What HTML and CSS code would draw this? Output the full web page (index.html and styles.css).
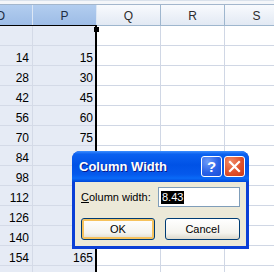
FILE: index.html
```html
<!DOCTYPE html>
<html>
<head>
<meta charset="utf-8">
<link rel="stylesheet" href="styles.css">
</head>
<body>
<div class="sheet">
  <div class="topbar"></div>
  <div class="grid">
    <div class="hd sel">O</div><div class="hd sel">P</div><div class="hd">Q</div><div class="hd">R</div><div class="hd">S</div>
    <div class="c sel"></div><div class="c sel"></div><div class="c"></div><div class="c"></div><div class="c"></div>
    <div class="c sel">14</div><div class="c sel">15</div><div class="c"></div><div class="c"></div><div class="c"></div>
    <div class="c sel">28</div><div class="c sel">30</div><div class="c"></div><div class="c"></div><div class="c"></div>
    <div class="c sel">42</div><div class="c sel">45</div><div class="c"></div><div class="c"></div><div class="c"></div>
    <div class="c sel">56</div><div class="c sel">60</div><div class="c"></div><div class="c"></div><div class="c"></div>
    <div class="c sel">70</div><div class="c sel">75</div><div class="c"></div><div class="c"></div><div class="c"></div>
    <div class="c sel">84</div><div class="c sel">90</div><div class="c"></div><div class="c"></div><div class="c"></div>
    <div class="c sel">98</div><div class="c sel">105</div><div class="c"></div><div class="c"></div><div class="c"></div>
    <div class="c sel">112</div><div class="c sel">120</div><div class="c"></div><div class="c"></div><div class="c"></div>
    <div class="c sel">126</div><div class="c sel">135</div><div class="c"></div><div class="c"></div><div class="c"></div>
    <div class="c sel">140</div><div class="c sel">150</div><div class="c"></div><div class="c"></div><div class="c"></div>
    <div class="c sel">154</div><div class="c sel">165</div><div class="c"></div><div class="c"></div><div class="c"></div>
    <div class="c sel"></div><div class="c sel"></div><div class="c"></div><div class="c"></div><div class="c"></div>
  </div>
</div>
<div class="selection"><span class="handle"></span></div>
<div class="dialog">
  <div class="titlebar">
    <span class="title">Column Width</span>
    <span class="cap help">?</span>
    <span class="cap close"><svg width="19" height="19" viewBox="0 0 19 19"><path d="M5 5L14 14M14 5L5 14" stroke="#fff" stroke-width="2.2" stroke-linecap="square"/></svg></span>
  </div>
  <div class="client">
    <div class="field-row">
      <span class="label"><u>C</u>olumn width:</span>
      <div class="input"><span class="hl">8.43</span></div>
    </div>
    <div class="btn-row">
      <button class="btn default">OK</button>
      <button class="btn">Cancel</button>
    </div>
  </div>
</div>
</body>
</html>
```
FILE: styles.css
```css
* { box-sizing: border-box; }
html, body { margin: 0; padding: 0; }
body {
  width: 274px;
  height: 272px;
  overflow: hidden;
  position: relative;
  background: #fff;
  font-family: "Liberation Sans", Arial, sans-serif;
}
.sheet {
  margin-left: -31px;
  width: 320px;
}
.topbar {
  height: 5px;
  background: linear-gradient(to bottom, #d9e1eb 0, #d9e1eb 1px, #f4f6f9 1px, #f4f6f9 4px, #a3b6cc 4px, #a3b6cc 5px);
}
.grid {
  display: grid;
  grid-template-columns: repeat(5, 64px);
  grid-template-rows: 21px;
  grid-auto-rows: 20px;
}
.hd {
  border-right: 1px solid #9eb6ce;
  border-bottom: 1px solid #9eb6ce;
  background: linear-gradient(to bottom, #f8fafd, #e2e9f3);
  display: flex;
  align-items: center;
  justify-content: center;
  font-size: 12px;
  color: #2c2c2c;
  padding-top: 1px;
}
.hd.sel {
  background: linear-gradient(to bottom, #b2cdef, #9dbce6);
  border-right-color: #dce7f5;
  color: #1e2e44;
}
.c {
  border-right: 1px solid #d0d7e5;
  border-bottom: 1px solid #d0d7e5;
  display: flex;
  align-items: flex-end;
  justify-content: flex-end;
  padding: 0 3px 1px 0;
  font-size: 12px;
  line-height: 12px;
  color: #000;
}
.c.sel {
  background: #e6ebf5;
  border-color: #d4dae7;
}
.selection {
  position: absolute;
  left: -10px;
  top: 25px;
  width: 107px;
  bottom: -10px;
  border-top: 1px solid #000;
  border-right: 2px solid #000;
}
.handle {
  position: absolute;
  left: 104px;
  top: 1px;
  width: 5px;
  height: 5px;
  background: #000;
}
.dialog {
  position: absolute;
  left: 72px;
  top: 151px;
  width: 177px;
  height: 98px;
  border-radius: 8px 8px 0 0;
  background: #0b3fd6;
  display: flex;
  flex-direction: column;
  overflow: hidden;
}
.titlebar {
  height: 31px;
  flex: none;
  display: flex;
  align-items: center;
  padding: 0 4px 0 7px;
  background: linear-gradient(to bottom, #3d8fff 0%, #0b61f0 10%, #0052e6 45%, #0559ec 75%, #0a6af7 88%, #0047d9 100%);
}
.title {
  flex: 1;
  color: #fff;
  font-weight: bold;
  font-size: 13px;
  text-shadow: 1px 1px 0 #0a1a8a;
}
.cap {
  width: 21px;
  height: 21px;
  border: 1px solid #fff;
  border-radius: 3px;
  display: flex;
  align-items: center;
  justify-content: center;
}
.help {
  margin-right: 2px;
  background: radial-gradient(circle at 30% 25%, #6e9cf8, #2a62e8 55%, #1a4fd6);
  color: #fff;
  font-weight: bold;
  font-size: 15px;
}
.close {
  background: radial-gradient(circle at 30% 25%, #f08a68, #e0522c 55%, #c83a18);
}
.client {
  flex: 1;
  margin: 0 3px 3px;
  background: #ece9d8;
  padding: 5px 6px 0 6px;
  display: flex;
  flex-direction: column;
}
.field-row {
  display: flex;
  justify-content: space-between;
  align-items: center;
  height: 20px;
}
.label {
  font-size: 11px;
  color: #000;
}
.input {
  width: 82px;
  height: 20px;
  border: 1px solid #7f9db9;
  background: #fff;
  padding: 2px;
  display: flex;
  align-items: center;
}
.hl {
  background: #000;
  color: #fff;
  font-size: 11px;
  line-height: 13px;
  padding: 0 1px;
}
.btn-row {
  margin-top: 11px;
  display: flex;
  justify-content: space-between;
}
.btn {
  height: 22px;
  width: 75px;
  border: 1px solid #003c74;
  border-radius: 3px;
  background: linear-gradient(to bottom, #ffffff, #f4f3ee 70%, #dcd8cc);
  font-family: "Liberation Sans", Arial, sans-serif;
  font-size: 11px;
  color: #000;
  padding: 0;
}
.btn.default {
  width: 74px;
  box-shadow: inset 0 0 0 2px #f6c25d;
}
```
